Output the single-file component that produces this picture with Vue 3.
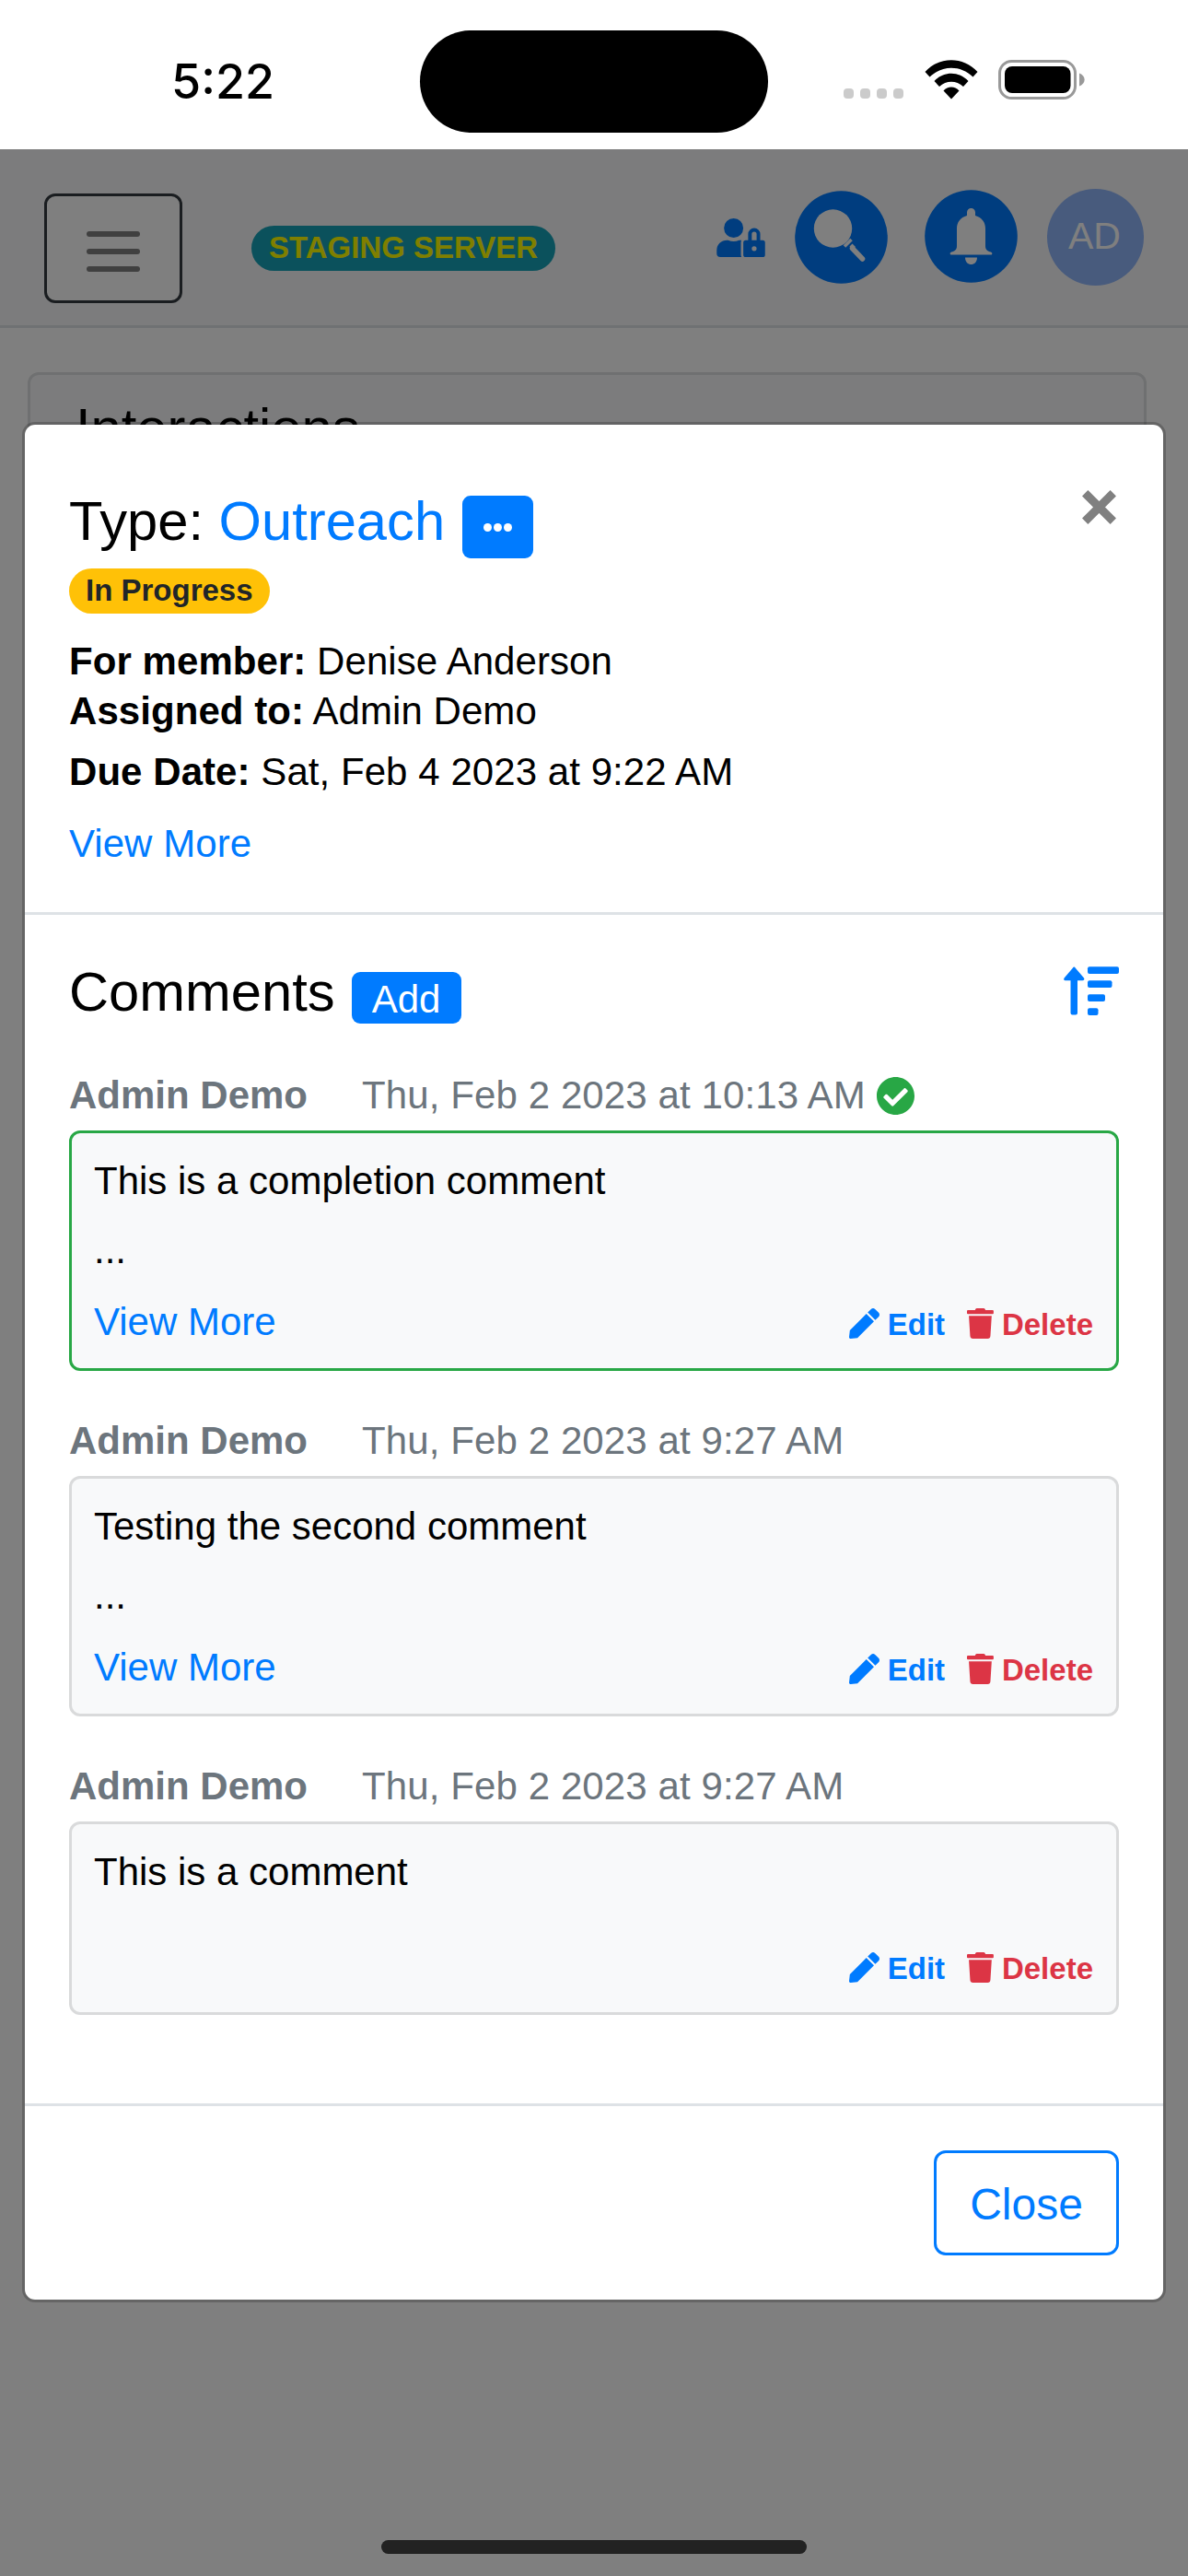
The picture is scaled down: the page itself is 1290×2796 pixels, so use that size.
<template>
  <div class="screen">
    <div class="status-bar">
      <span class="clock">5:22</span>
      <div class="island"></div>
      <div class="status-icons">
        <div class="cell-dots">
          <i v-for="n in 4" :key="n"></i>
        </div>
        <svg class="wifi" viewBox="0 0 58 43">
          <path d="M0.500 13C16-4 42-4 57.500 13L52.500 18.500C39 5.500 19 5.500 5.500 18.500Z" />
          <path d="M10.500 23C20.500 12 37.500 12 47.500 23L42 29C34.500 22 23.500 22 16 29Z" />
          <path d="M20.500 33.500C25 28 33 28 37.500 33.500L29 42.500Z" />
        </svg>
        <svg class="battery" viewBox="0 0 95 43">
          <rect x="1.500" y="1.500" width="82" height="40" rx="13" fill="none" stroke="#999" stroke-width="3" />
          <rect x="7" y="7" width="71.500" height="29" rx="8" />
          <path d="M88 14.500C95.500 17 95.500 26 88 28.500Z" fill="#999" />
        </svg>
      </div>
    </div>

    <main class="page">
      <nav class="navbar">
        <div class="nav-left">
          <button class="toggler">
            <i v-for="n in 3" :key="n"></i>
          </button>
          <span class="badge badge-info">STAGING SERVER</span>
        </div>
        <div class="nav-right">
          <svg class="user-lock" viewBox="0 0 640 512">
            <path d="M224 256A128 128 0 1 0 96 128a128 128 0 0 0 128 128zm96 64a63.080 63.080 0 0 1 8.100-30.500c-4.800-.5-9.500-1.500-14.500-1.500h-16.700a174.080 174.080 0 0 1-145.800 0h-16.700A134.430 134.430 0 0 0 0 422.400V464a48 48 0 0 0 48 48h280.900a63.540 63.540 0 0 1-8.900-32zm288-32h-32v-80a80 80 0 0 0-160 0v80h-32a32 32 0 0 0-32 32v160a32 32 0 0 0 32 32h224a32 32 0 0 0 32-32V320a32 32 0 0 0-32-32zM496 432a32 32 0 1 1 32-32 32 32 0 0 1-32 32zm32-144h-64v-80a32 32 0 0 1 64 0z" />
          </svg>
          <svg class="round search" viewBox="0 0 101 101">
            <circle class="disc" cx="50.500" cy="50.500" r="50.300" />
            <circle cx="41.500" cy="41" r="20.700" />
            <path d="M54 60.500L61.500 53" stroke-width="3.500" />
            <path d="M62.500 62.500L73.500 74" stroke-width="5.500" stroke-linecap="round" />
            <path d="M59.500 60.500L62.500 57.500L66 61L62.500 64.500Z" />
          </svg>
          <svg class="round bell" viewBox="0 0 101 101">
            <circle class="disc" cx="50.500" cy="50.500" r="50.300" />
            <path d="M46 28V24.500a4.500 4.500 0 0 1 9 0V28C62 30 66 35 66 42V61C66 65 68.500 67 72 67.500C74 68.500 73.500 70.500 72 70.500H29C27.500 70.500 27 68.500 29 67.500C32.500 67 35 65 35 61V42C35 35 39 30 46 28Z" />
            <path d="M44 73.500H57C57 83.500 44 83.500 44 73.500Z" />
          </svg>
          <span class="avatar">AD</span>
        </div>
      </nav>

      <section class="card">
        <h2>Interactions</h2>
      </section>

      <div class="backdrop"></div>

      <div class="modal">
        <header class="modal-header">
          <div>
            <div class="title-row">
              <h3>Type: <a>Outreach</a></h3>
              <button class="more-btn">
                <i v-for="n in 3" :key="n"></i>
              </button>
            </div>
            <span class="badge badge-warning">In Progress</span>
            <p class="info"><b>For member:</b> Denise Anderson</p>
            <p><b>Assigned to:</b> Admin Demo</p>
            <p class="due"><b>Due Date:</b> Sat, Feb 4 2023 at 9:22 AM</p>
            <p class="view"><a>View More</a></p>
          </div>
          <svg class="dismiss" viewBox="0 0 37 37">
            <path d="M3.200 3.200L33.800 33.800M33.800 3.200L3.200 33.800" stroke="#808080" stroke-width="9" />
          </svg>
        </header>

        <section class="modal-body">
          <div class="comments-head">
            <h3>Comments</h3>
            <button class="add-btn">Add</button>
            <svg class="sort" viewBox="0 0 60 53">
              <path d="M11.300 0.600Q12 0.600 13 2L22 12.500Q23.300 15 20.500 15.200H15V50.500Q15 52.500 13 52.500H9.500Q7.500 52.500 7.500 50.500V15.200H2Q-0.700 15 0.600 12.500L9.600 2Q10.600 0.600 11.300 0.600Z" />
              <rect
                v-for="(w, i) in [34, 26.5, 19, 11.5]"
                :key="w"
                x="26"
                :y="0.3 + i * 15"
                :width="w"
                height="7.700"
                rx="2"
              />
            </svg>
          </div>

          <article v-for="comment in comments" :key="comment.id" class="comment">
            <div class="comment-meta">
              <b>{{ comment.author }}</b>
              <span>{{ comment.date }}</span>
              <svg v-if="comment.completion" class="check" viewBox="8 8 496 496">
                <path d="M504 256c0 136.967-111.033 248-248 248S8 392.967 8 256 119.033 8 256 8s248 111.033 248 248zM227.314 387.314l184-184c6.248-6.248 6.248-16.379 0-22.627l-22.627-22.627c-6.248-6.249-16.379-6.249-22.628 0L216 308.118l-70.059-70.059c-6.248-6.248-16.379-6.248-22.628 0l-22.627 22.627c-6.248 6.248-6.248 16.379 0 22.627l104 104c6.249 6.249 16.379 6.249 22.628.001z" />
              </svg>
            </div>
            <div class="comment-box" :class="{ completed: comment.completion }">
              <p>{{ comment.text }}</p>
              <p v-if="comment.truncated" class="ellipsis">...</p>
              <div class="comment-footer" :class="{ spaced: !comment.truncated }">
                <a v-if="comment.truncated">View More</a>
                <div class="actions">
                  <span class="edit">
                    <svg viewBox="0 0 512 512">
                      <path d="M290.740 93.240l128.020 128.020-277.990 277.990-114.140 12.600C11.350 513.540-1.560 500.620.14 485.340l12.700-114.220 277.900-277.880zm207.200-19.060l-60.110-60.110c-18.750-18.750-49.160-18.750-67.910 0l-56.550 56.550 128.020 128.020 56.550-56.550c18.750-18.760 18.750-49.160 0-67.910z" />
                    </svg>
                    Edit
                  </span>
                  <span class="delete">
                    <svg viewBox="0 0 448 512">
                      <path d="M432 32H312l-9.400-18.700A24 24 0 0 0 281.100 0H166.800a23.720 23.720 0 0 0-21.400 13.300L136 32H16A16 16 0 0 0 0 48v32a16 16 0 0 0 16 16h416a16 16 0 0 0 16-16V48a16 16 0 0 0-16-16zM32 128L53.200 467a48 48 0 0 0 47.900 45h245.800a48 48 0 0 0 47.900-45L416 128z" />
                    </svg>
                    Delete
                  </span>
                </div>
              </div>
            </div>
          </article>
        </section>

        <footer class="modal-footer">
          <button class="close-btn">Close</button>
        </footer>
      </div>

      <div class="home-indicator"></div>
    </main>
  </div>
</template>

<script setup>
const comments = [
  {
    id: 3,
    author: 'Admin Demo',
    date: 'Thu, Feb 2 2023 at 10:13 AM',
    text: 'This is a completion comment',
    truncated: true,
    completion: true,
  },
  {
    id: 2,
    author: 'Admin Demo',
    date: 'Thu, Feb 2 2023 at 9:27 AM',
    text: 'Testing the second comment',
    truncated: true,
    completion: false,
  },
  {
    id: 1,
    author: 'Admin Demo',
    date: 'Thu, Feb 2 2023 at 9:27 AM',
    text: 'This is a comment',
    truncated: false,
    completion: false,
  },
];
</script>

<style>
body {
  margin: 0;
  background: #fff;
}
</style>

<style scoped>
* {
  box-sizing: border-box;
}

.screen {
  width: 1290px;
  height: 2796px;
  display: flex;
  flex-direction: column;
  overflow: hidden;
  font-family: "Liberation Sans", Arial, sans-serif;
  font-size: 42px;
  line-height: 54px;
  color: #000;
}

h2, h3, p {
  margin: 0;
  font-weight: 400;
}

h2, h3 {
  font-size: 59.700px;
  line-height: 72px;
  white-space: nowrap;
}

button {
  padding: 0;
  border: 0;
  font-family: inherit;
  font-size: inherit;
}

a {
  color: #007bff;
}

svg {
  display: block;
  flex: none;
}

/* status bar */
.status-bar {
  flex: none;
  height: 162px;
  display: grid;
  grid-template-columns: 456px 378px 1fr;
}

.clock {
  padding: 58px 0 0 186px;
  font-family: Inter, sans-serif;
  font-size: 52px;
  font-weight: 500;
  line-height: 62px;
}

.island {
  height: 111px;
  margin-top: 33px;
  border-radius: 56px;
  background: #000;
}

.status-icons {
  display: flex;
  align-items: flex-start;
  padding: 65px 0 0 82px;
}

.cell-dots {
  display: flex;
  gap: 7px;
  margin: 31px 23px 0 0;
}

.cell-dots i {
  width: 11px;
  height: 11px;
  border-radius: 4px;
  background: #cbcbcb;
}

.wifi {
  width: 58px;
  height: 43px;
  margin-right: 22px;
}

.battery {
  width: 95px;
  height: 43px;
}

/* page behind the dialog */
.page {
  flex: 1;
  position: relative;
}

.navbar {
  height: 194px;
  padding: 43px 48px 0;
  display: flex;
  justify-content: space-between;
  align-items: flex-start;
  background: #f8f9fa;
  border-bottom: 3px solid #dee2e6;
}

.nav-left {
  display: flex;
  align-items: center;
  gap: 75px;
  margin-top: 5px;
}

.toggler {
  width: 150px;
  height: 119px;
  padding-top: 7px;
  display: flex;
  flex-direction: column;
  align-items: center;
  justify-content: center;
  gap: 13px;
  border: 3px solid #343a40;
  border-radius: 12px;
  background: #fff;
}

.toggler i {
  width: 58px;
  height: 6px;
  border-radius: 3px;
  background: #808080;
}

.badge {
  display: block;
  width: fit-content;
  height: 49px;
  padding: 0 19px;
  border-radius: 25px;
  font-size: 33px;
  font-weight: 700;
  line-height: 47px;
  white-space: nowrap;
}

.badge-info {
  background: #17a2b8;
  color: #ff0;
}

.badge-warning {
  margin-top: 11px;
  padding: 0 18px;
  background: #ffc107;
  color: #212529;
}

.nav-right {
  height: 105px;
  display: flex;
  align-items: center;
}

.user-lock {
  width: 53px;
  height: 42px;
  fill: #007bff;
}

.round {
  width: 101px;
  height: 101px;
  fill: #fff;
  stroke: #fff;
  stroke-width: 0;
}

.disc {
  fill: #007bff;
}

.search {
  margin: 0 40px 0 32px;
}

.bell {
  margin: -2px 32px 0 0;
}

.avatar {
  width: 105px;
  height: 105px;
  padding-right: 2px;
  border-radius: 50%;
  background: #90b6fa;
  color: #fff;
  font-size: 41px;
  line-height: 103px;
  text-align: center;
}

.card {
  height: 600px;
  margin: 48px 45px 0 30px;
  padding: 22px 49px;
  border: 3px solid #dfe0e2;
  border-radius: 12px;
  background: #f8f9fa;
}

.backdrop {
  position: absolute;
  inset: 0;
  background: rgba(0, 0, 0, 0.5);
}

.home-indicator {
  position: absolute;
  left: 414px;
  bottom: 24px;
  width: 462px;
  height: 15px;
  border-radius: 8px;
  background: #222;
}

/* dialog */
.modal {
  position: absolute;
  top: 296px;
  left: 24px;
  right: 24px;
  border: 3px solid rgba(0, 0, 0, 0.2);
  border-radius: 14px;
  background: #fff;
  background-clip: padding-box;
}

.modal-header {
  display: flex;
  justify-content: space-between;
  align-items: flex-start;
  padding: 69px 48px 47px;
  border-bottom: 3px solid #dee2e6;
}

.title-row {
  display: flex;
  align-items: flex-start;
  gap: 19px;
}

.more-btn {
  width: 77px;
  height: 68px;
  margin-top: 8px;
  display: flex;
  align-items: center;
  justify-content: center;
  gap: 2px;
  border-radius: 9px;
  background: #007bff;
}

.more-btn i {
  width: 9px;
  height: 9px;
  border-radius: 50%;
  background: #fff;
}

.info {
  margin-top: 25px;
}

.modal-header p {
  letter-spacing: 0.06px;
}

.due {
  margin-top: 12px;
}

.view {
  margin-top: 24px;
}

.dismiss {
  width: 37px;
  height: 37px;
  margin: 2px 3px 0 0;
}

.modal-body {
  padding: 48px 48px 47px;
}

.comments-head {
  display: flex;
  align-items: flex-start;
  margin-bottom: 49px;
}

.add-btn {
  width: 119px;
  height: 56px;
  margin: 14px 0 0 18px;
  padding-top: 3px;
  border-radius: 9px;
  background: #007bff;
  color: #fff;
  line-height: 53px;
}

.sort {
  width: 60px;
  height: 53px;
  margin: 8px 0 0 auto;
  fill: #007bff;
}

.comment {
  margin-bottom: 49px;
}

.comment-meta {
  display: flex;
  align-items: center;
  margin-bottom: 11px;
  color: #6c757d;
}

.comment-meta span {
  margin-left: 59px;
  letter-spacing: 0.1px;
}

.check {
  width: 41px;
  height: 41px;
  margin-left: 12px;
  fill: #28a745;
}

.comment-box {
  padding: 25px 25px 23px 24px;
  border: 3px solid #d9dadb;
  border-radius: 12px;
  background: #f8f9fa;
}

.comment-box.completed {
  border-color: #28a745;
}

.ellipsis {
  margin-top: 21px;
}

.comment-footer {
  display: flex;
  margin-top: 24px;
}

.comment-footer.spaced {
  margin-top: 48px;
}

.actions {
  display: flex;
  gap: 24px;
  margin-left: auto;
  padding-top: 5px;
  font-size: 33px;
  font-weight: 700;
  line-height: 49px;
}

.actions span {
  display: flex;
  align-items: center;
  gap: 9px;
}

.actions svg {
  height: 33px;
  margin-bottom: 2px;
  fill: currentColor;
}

.edit {
  color: #007bff;
}

.delete {
  color: #dc3545;
}

.modal-footer {
  display: flex;
  justify-content: flex-end;
  padding: 48px;
  border-top: 3px solid #dee2e6;
}

.close-btn {
  width: 201px;
  height: 114px;
  padding-top: 2px;
  border: 3px solid #007bff;
  border-radius: 13px;
  background: #fff;
  color: #007bff;
  font-size: 48px;
}
</style>
